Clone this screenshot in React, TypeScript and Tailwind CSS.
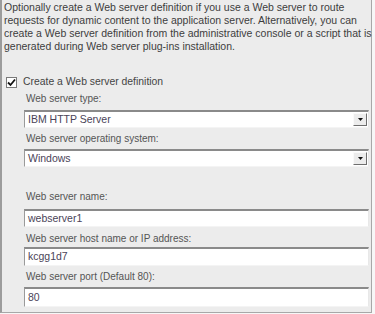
import React from "react";

const font = { fontFamily: '"Liberation Sans", Arial, sans-serif' };

function Select({ value, h }: { value: string; h: string }) {
  return (
    <div className={`flex items-stretch bg-white border-t-2 border-l border-t-[#8a8a8a] border-l-[#9a9a9a] border-b border-r border-b-[#f4f4f4] border-r-[#e8e8e8] ${h}`}>
      <div className="flex-1 flex items-center pl-[3px] text-[10.5px] text-[#4a4458]">{value}</div>
      <div className="w-[14px] my-[1px] mr-[1px] bg-[#ececec] border-t border-l border-[#fafafa] border-r border-b border-r-[#6e6e6e] border-b-[#6e6e6e] flex items-center justify-center">
        <svg width="5" height="3" viewBox="0 0 5 3"><path d="M0 0h5L2.5 3z" fill="#111" /></svg>
      </div>
    </div>
  );
}

function Input({ value, h }: { value: string; h: string }) {
  return (
    <div className={`flex items-stretch bg-white border-t-2 border-l border-t-[#8a8a8a] border-l-[#9a9a9a] border-b border-r border-b-[#f4f4f4] border-r-[#e8e8e8] ${h}`}>
      <div className="flex-1 flex items-center pl-[3px] text-[10.5px] text-[#4a4458]">{value}</div>
    </div>
  );
}

const lines = [
  "Optionally create a Web server definition if you use a Web server to route",
  "requests for dynamic content to the application server. Alternatively, you can",
  "create a Web server definition from the administrative console or a script that is",
  "generated during Web server plug-ins installation.",
];

export default function App() {
  return (
    <div style={font} className="w-[375px] h-[314px] bg-[#f7f7f7]">
      <div className="w-[372px] h-[313px] bg-[#ececec] border-l-2 border-r border-b border-l-[#9c9c9c] border-r-[#a8a8a8] border-b-[#a8a8a8] flex flex-col text-[#555] text-[10px]">
        <div className="pl-[2px] pt-[1px] leading-[13px] text-[10.5px] text-[#3d3d3d]">
          {lines.map((l) => (
            <div key={l} className="whitespace-nowrap">{l}</div>
          ))}
        </div>
        <div className="mt-[22px] h-[14px] flex items-center pl-[4px]">
          <div className="w-[11px] h-[11px] bg-white border border-[#7a7a7a] flex items-center justify-center">
            <svg width="9" height="9" viewBox="0 0 9 9"><path d="M1 4.5 L3.5 7 L8 1.5" stroke="#111" strokeWidth="1.8" fill="none" /></svg>
          </div>
          <span className="ml-[6px] text-[10.4px] text-[#444]">Create a Web server definition</span>
        </div>
        <div className="pl-[22px] pr-[2px] flex flex-col">
          <div className="mt-[3px] h-[14px] leading-[14px] pl-[2px]">Web server type:</div>
          <div className="mt-[4px]"><Select value="IBM HTTP Server" h="h-[18px]" /></div>
          <div className="mt-[4px] h-[14px] leading-[14px] pl-[2px]">Web server operating system:</div>
          <div className="mt-[3px]"><Select value="Windows" h="h-[18px]" /></div>
          <div className="mt-[23px] h-[14px] leading-[14px] pl-[2px]">Web server name:</div>
          <div className="mt-[5px]"><Input value="webserver1" h="h-[18px]" /></div>
          <div className="mt-[5px] h-[14px] leading-[14px] pl-[2px]">Web server host name or IP address:</div>
          <div className="mt-[1px]"><Input value="kcgg1d7" h="h-[19px]" /></div>
          <div className="mt-[4px] h-[14px] leading-[14px] pl-[2px]">Web server port (Default 80):</div>
          <div className="mt-[3px]"><Input value="80" h="h-[20px]" /></div>
        </div>
      </div>
    </div>
  );
}
